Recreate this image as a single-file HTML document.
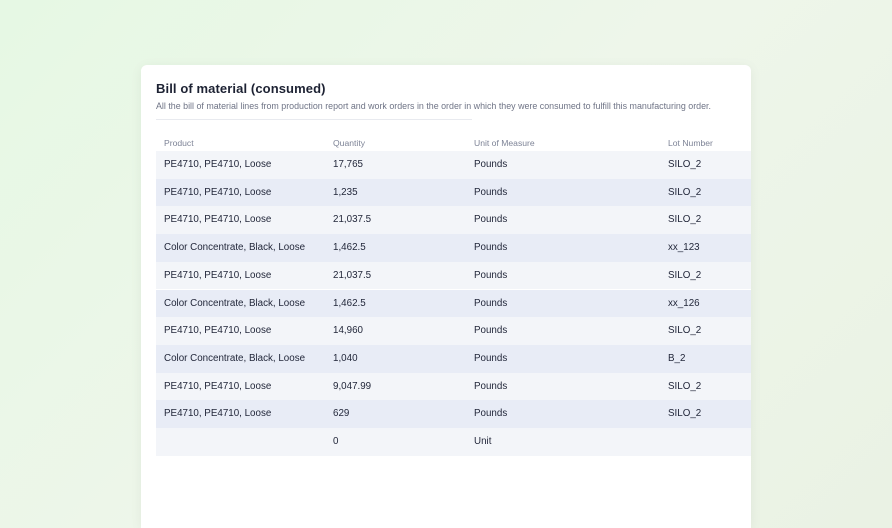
<!DOCTYPE html>
<html><head><style>
html,body{margin:0;padding:0;width:892px;height:528px;overflow:hidden;}
body{background:linear-gradient(135deg,#e6f8e4 0%,#eef6ea 50%,#eaf2e4 100%);font-family:"Liberation Sans",sans-serif;position:relative;}
.card{position:absolute;left:141px;top:65px;width:610px;height:463px;background:#fff;border-radius:6px 6px 0 0;box-shadow:0 2px 12px rgba(0,0,0,0.06);}
h1{position:absolute;left:15px;top:16px;margin:0;font-size:13px;font-weight:bold;color:#1d2233;letter-spacing:0.1px;}
.sub{position:absolute;left:15px;top:36px;font-size:8.9px;color:#6f7486;white-space:nowrap;}
.line{position:absolute;left:15px;top:54px;width:316px;height:1px;background:#e8eaef;}
.th{position:absolute;top:73px;font-size:8.6px;color:#7d8396;}
.row{position:absolute;left:15px;width:595px;height:27.7px;font-size:9.8px;color:#22273a;}
.row span{position:absolute;top:8px;}
.a{background:#f3f5f9}.b{background:#e8ecf6}
</style></head><body>
<div class="card">
<h1>Bill of material (consumed)</h1>
<div class="sub">All the bill of material lines from production report and work orders in the order in which they were consumed to fulfill this manufacturing order.</div>
<div class="line"></div>
<div class="th" style="left:23px">Product</div>
<div class="th" style="left:192px">Quantity</div>
<div class="th" style="left:333px">Unit of Measure</div>
<div class="th" style="left:527px">Lot Number</div>
<div class="row a" style="top:86px"><span style="left:8px">PE4710, PE4710, Loose</span><span style="left:177px">17,765</span><span style="left:318px">Pounds</span><span style="left:512px">SILO_2</span></div>
<div class="row b" style="top:113.7px"><span style="left:8px">PE4710, PE4710, Loose</span><span style="left:177px">1,235</span><span style="left:318px">Pounds</span><span style="left:512px">SILO_2</span></div>
<div class="row a" style="top:141.4px"><span style="left:8px">PE4710, PE4710, Loose</span><span style="left:177px">21,037.5</span><span style="left:318px">Pounds</span><span style="left:512px">SILO_2</span></div>
<div class="row b" style="top:169.1px"><span style="left:8px">Color Concentrate, Black, Loose</span><span style="left:177px">1,462.5</span><span style="left:318px">Pounds</span><span style="left:512px">xx_123</span></div>
<div class="row a" style="top:196.8px"><span style="left:8px">PE4710, PE4710, Loose</span><span style="left:177px">21,037.5</span><span style="left:318px">Pounds</span><span style="left:512px">SILO_2</span></div>
<div class="row b" style="top:224.5px"><span style="left:8px">Color Concentrate, Black, Loose</span><span style="left:177px">1,462.5</span><span style="left:318px">Pounds</span><span style="left:512px">xx_126</span></div>
<div class="row a" style="top:252.2px"><span style="left:8px">PE4710, PE4710, Loose</span><span style="left:177px">14,960</span><span style="left:318px">Pounds</span><span style="left:512px">SILO_2</span></div>
<div class="row b" style="top:279.9px"><span style="left:8px">Color Concentrate, Black, Loose</span><span style="left:177px">1,040</span><span style="left:318px">Pounds</span><span style="left:512px">B_2</span></div>
<div class="row a" style="top:307.6px"><span style="left:8px">PE4710, PE4710, Loose</span><span style="left:177px">9,047.99</span><span style="left:318px">Pounds</span><span style="left:512px">SILO_2</span></div>
<div class="row b" style="top:335.3px"><span style="left:8px">PE4710, PE4710, Loose</span><span style="left:177px">629</span><span style="left:318px">Pounds</span><span style="left:512px">SILO_2</span></div>
<div class="row a" style="top:363px"><span style="left:177px">0</span><span style="left:318px">Unit</span></div>
</div>
</body></html>
